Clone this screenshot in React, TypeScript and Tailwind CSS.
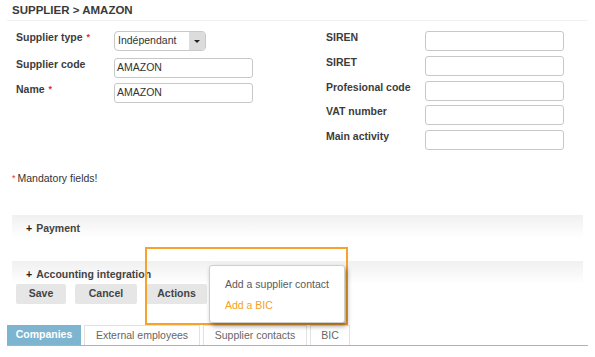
import React from 'react';

// ==========================================
// Small pieces
// ==========================================

const Star = () => <span className="text-[#e0302b] ml-[4px] text-[9px] align-top">*</span>;

const Field = ({ value = '', width = 'w-[139px]' }: { value?: string; width?: string }) => (
  <div className={`${width} h-[20px] border border-[#c8c8c8] rounded-[3px] bg-white px-[2px] flex items-center text-[10.5px] text-[#333]`}>
    {value}
  </div>
);

const Row = ({ label, required, labelWidth, children }: any) => (
  <div className="flex items-start h-[20px]">
    <div className={`${labelWidth} leading-[13px] font-bold text-[10.5px] text-[#3c3c3c]`}>
      {label}
      {required && <Star />}
    </div>
    {children}
  </div>
);

const Section = ({ title }: { title: string }) => (
  <div className="mx-[12px] h-[23px] bg-gradient-to-b from-[#f0f0f0] to-white pl-[14px] pt-[7px] leading-[13px] text-[10.5px] font-bold text-[#444]">
    <span className="mr-[4px] text-[#222]">+</span>{title}
  </div>
);

const buttons = [
  { label: 'Save', w: 'w-[50px]' },
  { label: 'Cancel', w: 'w-[62px]' },
  { label: 'Actions', w: 'w-[61px]' },
];

const tabs = [
  { label: 'Companies', w: 'w-[74px]', active: true },
  { label: 'External employees', w: 'w-[116px]' },
  { label: 'Supplier contacts', w: 'w-[104px]' },
  { label: 'BIC', w: 'w-[40px]' },
];

// ==========================================
// Page
// ==========================================

export default function App() {
  return (
    <div className="relative w-[595px] h-[357px] bg-white overflow-hidden font-['Liberation_Sans',Arial,sans-serif]">
      {/* Title */}
      <div className="mx-[7px] h-[21px] border-b border-[#f0f0f0] pl-[5px] pt-[3px] leading-[14px] text-[11.5px] font-bold text-[#3a3a3a]">
        SUPPLIER &gt; AMAZON
      </div>

      {/* Form */}
      <div className="flex pt-[10px]">
        <div className="pl-[16px] w-[326px] flex flex-col">
          <Row label="Supplier type" required labelWidth="w-[98px]">
            <div className="w-[92px] h-[20px] border border-[#c8c8c8] rounded-[4px] flex overflow-hidden">
              <div className="flex-1 flex items-center pl-[3px] text-[10.5px] text-[#333]">Indépendant</div>
              <div className="w-[16px] bg-[#dcdcdc] flex items-center justify-center">
                <div className="w-0 h-0 border-l-[3px] border-r-[3px] border-t-[3px] border-l-transparent border-r-transparent border-t-[#222]" />
              </div>
            </div>
          </Row>
          <div className="h-[7px]" />
          <Row label="Supplier code" labelWidth="w-[98px]">
            <Field value="AMAZON" />
          </Row>
          <div className="h-[5px]" />
          <Row label="Name" required labelWidth="w-[98px]">
            <Field value="AMAZON" />
          </Row>
        </div>
        <div className="flex flex-col gap-[4.75px]">
          <Row label="SIREN" labelWidth="w-[99px]"><Field /></Row>
          <Row label="SIRET" labelWidth="w-[99px]"><Field /></Row>
          <Row label="Profesional code" labelWidth="w-[99px]"><Field /></Row>
          <Row label="VAT number" labelWidth="w-[99px]"><Field /></Row>
          <Row label="Main activity" labelWidth="w-[99px]"><Field /></Row>
        </div>
      </div>

      {/* Mandatory note */}
      <div className="mt-[22px] pl-[12px] leading-[13px] text-[10.5px] text-[#333]">
        <span className="text-[#e0302b] text-[9px] align-top mr-[2px]">*</span>Mandatory fields!
      </div>

      {/* Collapsible sections */}
      <div className="mt-[30px]">
        <Section title="Payment" />
        <div className="h-[23px]" />
        <Section title="Accounting integration" />
      </div>

      {/* Buttons */}
      <div className="flex gap-[9px] pl-[16px]">
        {buttons.map(b => (
          <div key={b.label} className={`${b.w} h-[20px] bg-[#e6e6e6] rounded-[2px] flex items-center justify-center text-[10.5px] font-bold text-[#444]`}>
            {b.label}
          </div>
        ))}
      </div>

      {/* Tabs */}
      <div className="mt-[21px] mx-[7px] border-b border-[#8dbdd6] flex gap-[3px]">
        {tabs.map(t => (
          <div
            key={t.label}
            className={`${t.w} h-[20px] flex items-center justify-center text-[10.5px] ${
              t.active ? 'bg-[#7db4cf] text-white font-bold' : 'bg-white text-[#666] border border-b-0 border-[#e2e2e2]'
            }`}
          >
            {t.label}
          </div>
        ))}
      </div>

      {/* Highlight box over Actions */}
      <div className="absolute left-[145px] top-[247px] w-[203px] h-[78px] border-2 border-[#f7a22a]" />

      {/* Actions menu */}
      <div className="absolute left-[209px] top-[265px] w-[136px] h-[58px] bg-white border border-[#cfcfcf] rounded-[3px] shadow-[2px_3px_5px_rgba(0,0,0,0.4)] pl-[15px] pt-[12px] text-[10.5px] leading-[13px]">
        <div className="text-[#5a5a5a]">Add a supplier contact</div>
        <div className="mt-[8px] text-[#f5a020]">Add a BIC</div>
      </div>
    </div>
  );
}
